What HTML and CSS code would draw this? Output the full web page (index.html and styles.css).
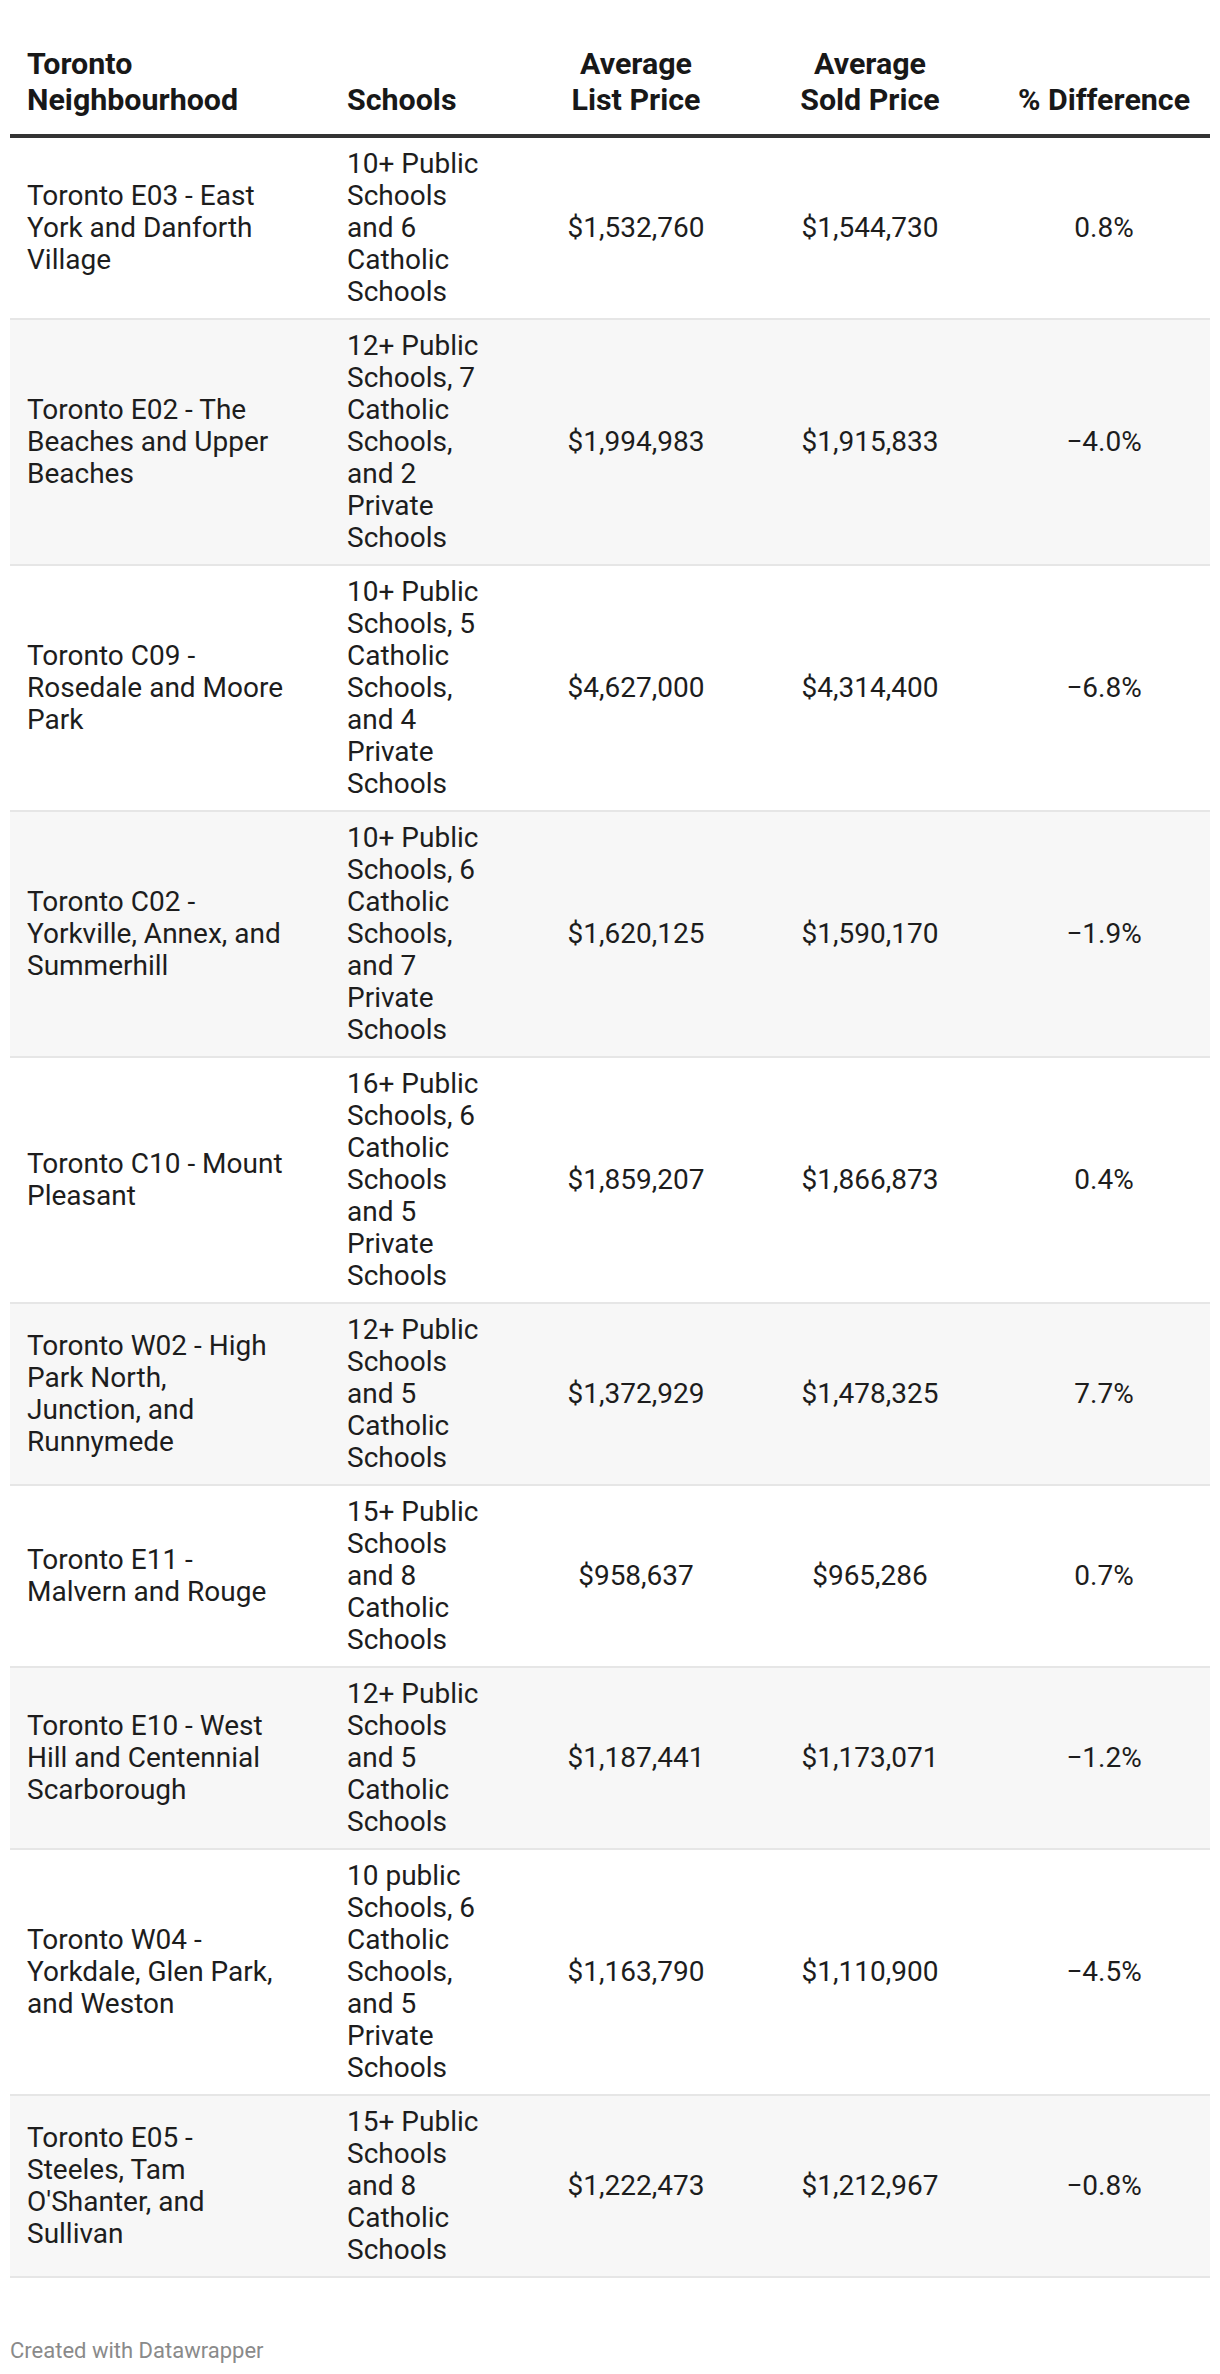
FILE: index.html
```html
<!DOCTYPE html>
<html lang="en">
<head>
<meta charset="utf-8">
<title>Toronto Neighbourhoods</title>
<link rel="stylesheet" href="styles.css">
</head>
<body>
<div class="chart">
  <table class="dw-table">
    <colgroup>
      <col class="c-name">
      <col class="c-schools">
      <col class="c-list">
      <col class="c-sold">
      <col class="c-diff">
    </colgroup>
    <thead>
      <tr>
        <th class="left">Toronto<br>Neighbourhood</th>
        <th class="left">Schools</th>
        <th class="center">Average<br>List Price</th>
        <th class="center">Average<br>Sold Price</th>
        <th class="center">% Difference</th>
      </tr>
    </thead>
    <tbody>
      <tr>
        <td class="name">Toronto E03 - East York and Danforth Village</td>
        <td class="schools">10+ Public Schools and 6 Catholic Schools</td>
        <td class="num">$1,532,760</td>
        <td class="num">$1,544,730</td>
        <td class="num">0.8%</td>
      </tr>
      <tr class="alt">
        <td class="name">Toronto E02 - The Beaches and Upper Beaches</td>
        <td class="schools">12+ Public Schools, 7 Catholic Schools, and 2 Private Schools</td>
        <td class="num">$1,994,983</td>
        <td class="num">$1,915,833</td>
        <td class="num">−4.0%</td>
      </tr>
      <tr>
        <td class="name">Toronto C09 - Rosedale and Moore Park</td>
        <td class="schools">10+ Public Schools, 5 Catholic Schools, and 4 Private Schools</td>
        <td class="num">$4,627,000</td>
        <td class="num">$4,314,400</td>
        <td class="num">−6.8%</td>
      </tr>
      <tr class="alt">
        <td class="name">Toronto C02 - Yorkville, Annex, and Summerhill</td>
        <td class="schools">10+ Public Schools, 6 Catholic Schools, and 7 Private Schools</td>
        <td class="num">$1,620,125</td>
        <td class="num">$1,590,170</td>
        <td class="num">−1.9%</td>
      </tr>
      <tr>
        <td class="name">Toronto C10 - Mount Pleasant</td>
        <td class="schools">16+ Public Schools, 6 Catholic Schools and 5 Private Schools</td>
        <td class="num">$1,859,207</td>
        <td class="num">$1,866,873</td>
        <td class="num">0.4%</td>
      </tr>
      <tr class="alt">
        <td class="name">Toronto W02 - High Park North, Junction,&nbsp;and Runnymede</td>
        <td class="schools">12+ Public Schools and 5 Catholic Schools</td>
        <td class="num">$1,372,929</td>
        <td class="num">$1,478,325</td>
        <td class="num">7.7%</td>
      </tr>
      <tr>
        <td class="name">Toronto E11 - Malvern and Rouge</td>
        <td class="schools">15+ Public Schools and 8 Catholic Schools</td>
        <td class="num">$958,637</td>
        <td class="num">$965,286</td>
        <td class="num">0.7%</td>
      </tr>
      <tr class="alt">
        <td class="name">Toronto E10 - West Hill and Centennial Scarborough</td>
        <td class="schools">12+ Public Schools and 5 Catholic Schools</td>
        <td class="num">$1,187,441</td>
        <td class="num">$1,173,071</td>
        <td class="num">−1.2%</td>
      </tr>
      <tr>
        <td class="name">Toronto W04 - Yorkdale, Glen Park, and Weston</td>
        <td class="schools">10 public Schools, 6 Catholic Schools, and 5 Private Schools</td>
        <td class="num">$1,163,790</td>
        <td class="num">$1,110,900</td>
        <td class="num">−4.5%</td>
      </tr>
      <tr class="alt">
        <td class="name">Toronto E05 - Steeles, Tam O'Shanter, and Sullivan</td>
        <td class="schools">15+ Public Schools and 8 Catholic Schools</td>
        <td class="num">$1,222,473</td>
        <td class="num">$1,212,967</td>
        <td class="num">−0.8%</td>
      </tr>
    </tbody>
  </table>
  <div class="footer">Created with Datawrapper</div>
</div>
</body>
</html>
```

FILE: styles.css
```css
html, body {
  margin: 0;
  padding: 0;
  background: #ffffff;
}

body {
  font-family: Roboto, "Liberation Sans", Arial, sans-serif;
  color: #1d1d1d;
}

.chart {
  padding: 46px 10px 0 10px;
}

.dw-table {
  width: 1200px;
  table-layout: fixed;
  border-collapse: collapse;
  border-spacing: 0;
}

.c-name { width: 320px; }
.c-schools { width: 200px; }
.c-list { width: 212px; }
.c-sold { width: 256px; }
.c-diff { width: 212px; }

.dw-table th {
  font-size: 30.4px;
  line-height: 36px;
  font-weight: 700;
  color: #181818;
  vertical-align: bottom;
  padding: 0 17px 16px 17px;
  border-bottom: 4px solid #333333;
}

.dw-table th.left { text-align: left; }
.dw-table th.center { text-align: center; padding-left: 4px; padding-right: 4px; }

.dw-table td {
  font-size: 28px;
  line-height: 32px;
  font-weight: 400;
  vertical-align: middle;
  padding: 10px 17px;
  border-bottom: 2px solid #e6e6e6;
}

.dw-table td.name { text-align: left; padding-right: 41px; }
.dw-table td.schools { text-align: left; padding-right: 41px; }
.dw-table td.num { text-align: center; padding-left: 4px; padding-right: 4px; }

.dw-table tr.alt td {
  background: #f7f7f7;
}

.footer {
  margin-top: 60px;
  font-size: 22px;
  line-height: 26px;
  color: #8a8a8a;
}
```
